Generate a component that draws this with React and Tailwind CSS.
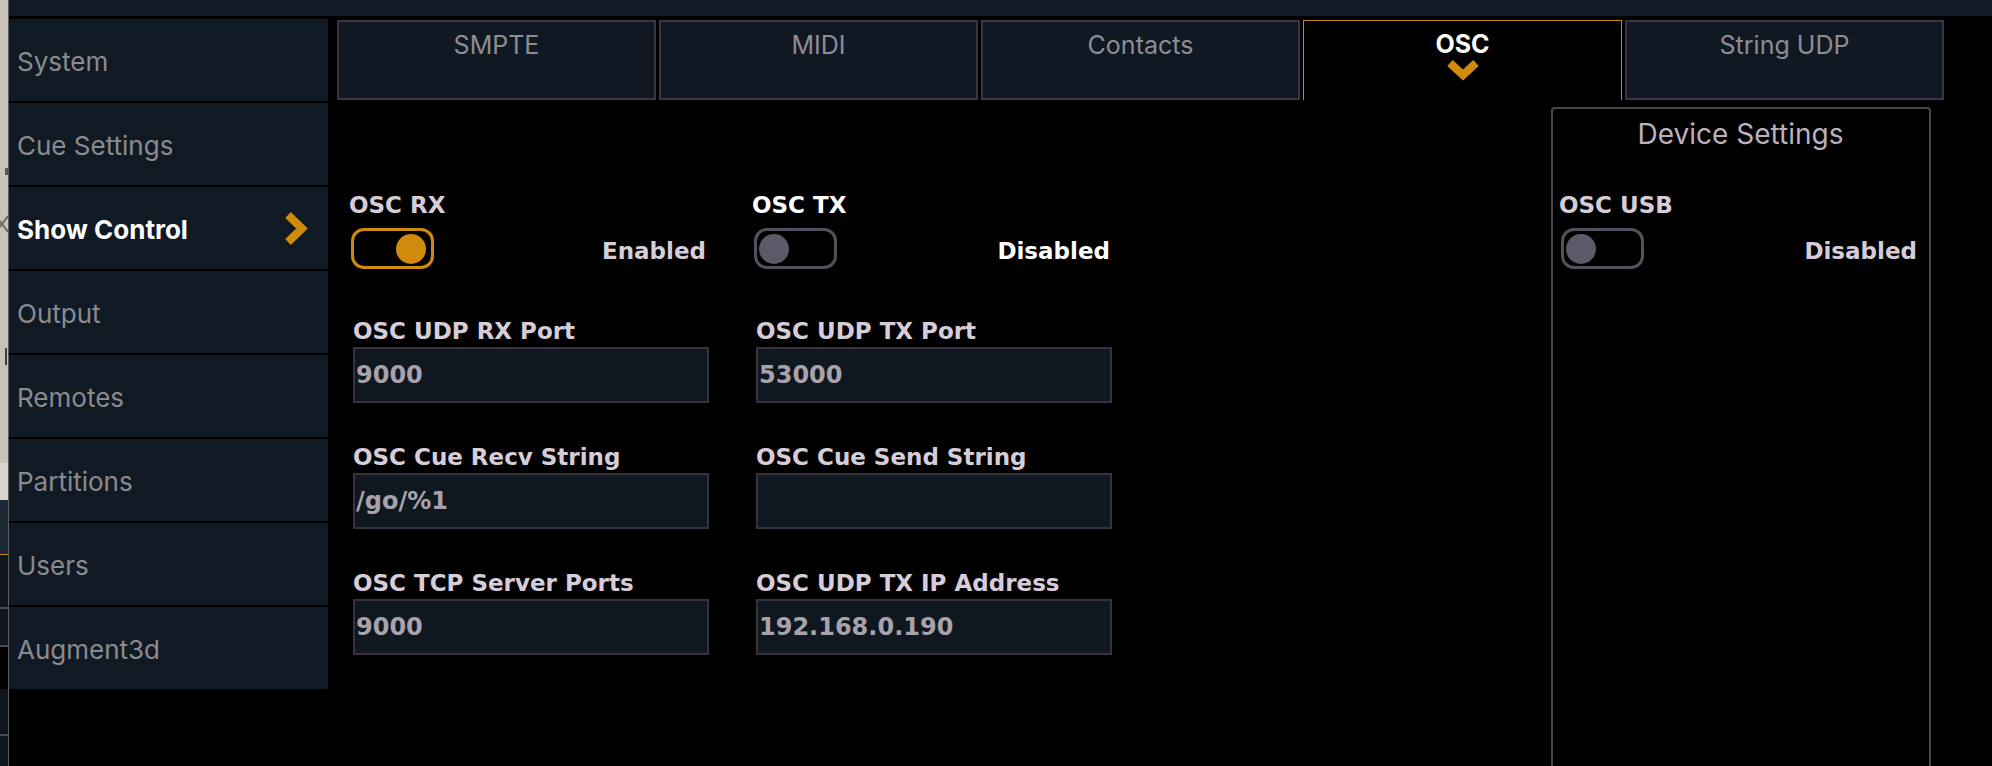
import React from 'react';

const dv = "font-['DejaVu_Sans',sans-serif]";
const inter = "font-['Inter',sans-serif]";

const sideItems = ['System', 'Cue Settings', 'Show Control', 'Output', 'Remotes', 'Partitions', 'Users', 'Augment3d'];
const tabs = ['SMPTE', 'MIDI', 'Contacts', 'OSC', 'String UDP'];

function Toggle({ on }) {
  return (
    <div
      className={`w-[83px] h-[41px] rounded-[13px] border-[3px] flex items-center ${
        on ? 'border-[#d08b0c] justify-end pr-[5px]' : 'border-[#55505e] justify-start pl-[2px]'
      }`}
    >
      <div className={`w-[30px] h-[30px] rounded-full ${on ? 'bg-[#d08b0c]' : 'bg-[#5e5969]'}`} />
    </div>
  );
}

function ToggleBlock({ label, on, status, bright }) {
  const color = bright ? 'text-white' : 'text-[#d6cdd9]';
  return (
    <div>
      <div className={`${dv} font-bold text-[23px] leading-[28px] ml-[-2px] ${color}`}>{label}</div>
      <div className="mt-[9px] flex items-center justify-between pr-[3px]">
        <Toggle on={on} />
        <span className={`${dv} font-bold text-[23px] leading-[28px] mt-[4px] ${color}`}>{status}</span>
      </div>
    </div>
  );
}

function Field({ label, value, first }) {
  return (
    <div className={first ? 'mt-[48px] ml-[2px]' : 'mt-[40px] ml-[2px]'}>
      <div className={`${dv} font-bold text-[23px] leading-[28px] text-[#d6cdd9]`}>{label}</div>
      <div className="mt-[2px] w-[356px] h-[56px] border-2 border-[#37323d] bg-[#0f1720] flex items-center pl-[1px]">
        <span className={`${dv} font-bold text-[24px] leading-[28px] text-[#a8a3ab]`}>{value}</span>
      </div>
    </div>
  );
}

function Chevron() {
  return (
    <svg width="24" height="35" viewBox="0 0 24 35">
      <polyline points="4,4 18,17.5 4,31" fill="none" stroke="#d08b0c" strokeWidth="8" strokeLinejoin="miter" />
    </svg>
  );
}

function ChevronDown() {
  return (
    <svg width="34" height="22" viewBox="0 0 34 22">
      <polyline points="4,4 17,16 30,4" fill="none" stroke="#d08b0c" strokeWidth="8" strokeLinejoin="miter" />
    </svg>
  );
}

export default function App() {
  return (
    <div className="w-[1992px] h-[766px] bg-black flex overflow-hidden">
      {/* window edge behind */}
      <div className="relative w-[9px] h-full flex flex-col border-r border-[#5e5b58] flex-none">
        <div className="h-[463px] shrink-0 bg-[#c8c2bb]" />
        <div className="h-[37px] shrink-0 bg-[#d8d4cf]" />
        <div className="h-[54px] shrink-0 bg-[#1c2a38]" />
        <div className="h-[1px] shrink-0 bg-[#c88a10]" />
        <div className="h-[54px] shrink-0 bg-[#10161e] border-b-2 border-[#484b53]" />
        <div className="h-[38px] shrink-0 bg-[#10161e] border-b-2 border-[#484b53]" />
        <div className="h-[42px] shrink-0 bg-black" />
        <div className="h-[47px] shrink-0 bg-[#0f151c] border-b-2 border-[#484b53]" />
        <div className="flex-1 bg-[#0f151c]" />
        <div className="absolute left-[5px] top-[168px] w-[3px] h-[7px] bg-[#5a5753]" />
        <div className="absolute left-[5px] top-[348px] w-[2px] h-[17px] bg-[#3f3d3b]" />
        <svg className="absolute left-0 top-[214px]" width="8" height="20" viewBox="0 0 8 20">
          <path d="M-4 2 L8 18 M8 2 L-4 18" stroke="#6c6863" strokeWidth="2" />
        </svg>
      </div>

      <div className="flex-1 flex flex-col min-h-0">
        <div className="h-[16px] shrink-0 bg-[#111a24]" />
        <div className="flex mt-[3px] shrink-0">
          {/* sidebar */}
          <div className="w-[319px] flex flex-col gap-[2px] flex-none">
            {sideItems.map((item) => {
              const active = item === 'Show Control';
              return (
                <div key={item} className="h-[82px] shrink-0 bg-[#101a24] flex items-center justify-between pl-[8px] pr-[20px]">
                  <span
                    className={`${inter} text-[26px] leading-[32px] mt-[4px] ${
                      active ? 'font-bold text-white' : 'text-[#8b8a8e]'
                    }`}
                  >
                    {item}
                  </span>
                  {active && <Chevron />}
                </div>
              );
            })}
          </div>

          {/* main */}
          <div className="flex-1 flex flex-col">
            <div className="flex gap-[3px] ml-[9px] mt-[1px] h-[80px] shrink-0">
              {tabs.map((t) => {
                const active = t === 'OSC';
                return (
                  <div
                    key={t}
                    className={`w-[319px] flex flex-col items-center pt-[8px] ${
                      active
                        ? 'bg-black border-[1.5px] border-b-0 border-[#c98a0e]'
                        : 'bg-[#101923] border-2 border-[#3b3541]'
                    }`}
                  >
                    <span
                      className={`${inter} text-[25px] leading-[30px] ${
                        active ? 'font-bold text-white' : 'text-[#8f8c92]'
                      }`}
                    >
                      {t}
                    </span>
                    {active && <ChevronDown />}
                  </div>
                );
              })}
            </div>

            <div className="flex items-start">
              <div className="ml-[23px] mt-[91px] grid grid-cols-[358px_359px] gap-x-[45px]">
                <div className="flex flex-col">
                  <ToggleBlock label="OSC RX" on status="Enabled" />
                  <Field first label="OSC UDP RX Port" value="9000" />
                  <Field label="OSC Cue Recv String" value="/go/%1" />
                  <Field label="OSC TCP Server Ports" value="9000" />
                </div>
                <div className="flex flex-col">
                  <ToggleBlock label="OSC TX" status="Disabled" bright />
                  <Field first label="OSC UDP TX Port" value="53000" />
                  <Field label="OSC Cue Send String" value="" />
                  <Field label="OSC UDP TX IP Address" value="192.168.0.190" />
                </div>
              </div>

              <div className="ml-[438px] mt-[7px] w-[380px] h-[680px] border-2 border-[#4a4650] rounded-t-[4px] pl-[8px] pr-[9px] pt-[8px]">
                <div className={`${inter} text-[28px] leading-[34px] text-center text-[#b9b1bd]`}>
                  Device Settings
                </div>
                <div className="mt-[40px]">
                  <ToggleBlock label="OSC USB" status="Disabled" />
                </div>
              </div>
            </div>
          </div>
        </div>
      </div>
    </div>
  );
}
